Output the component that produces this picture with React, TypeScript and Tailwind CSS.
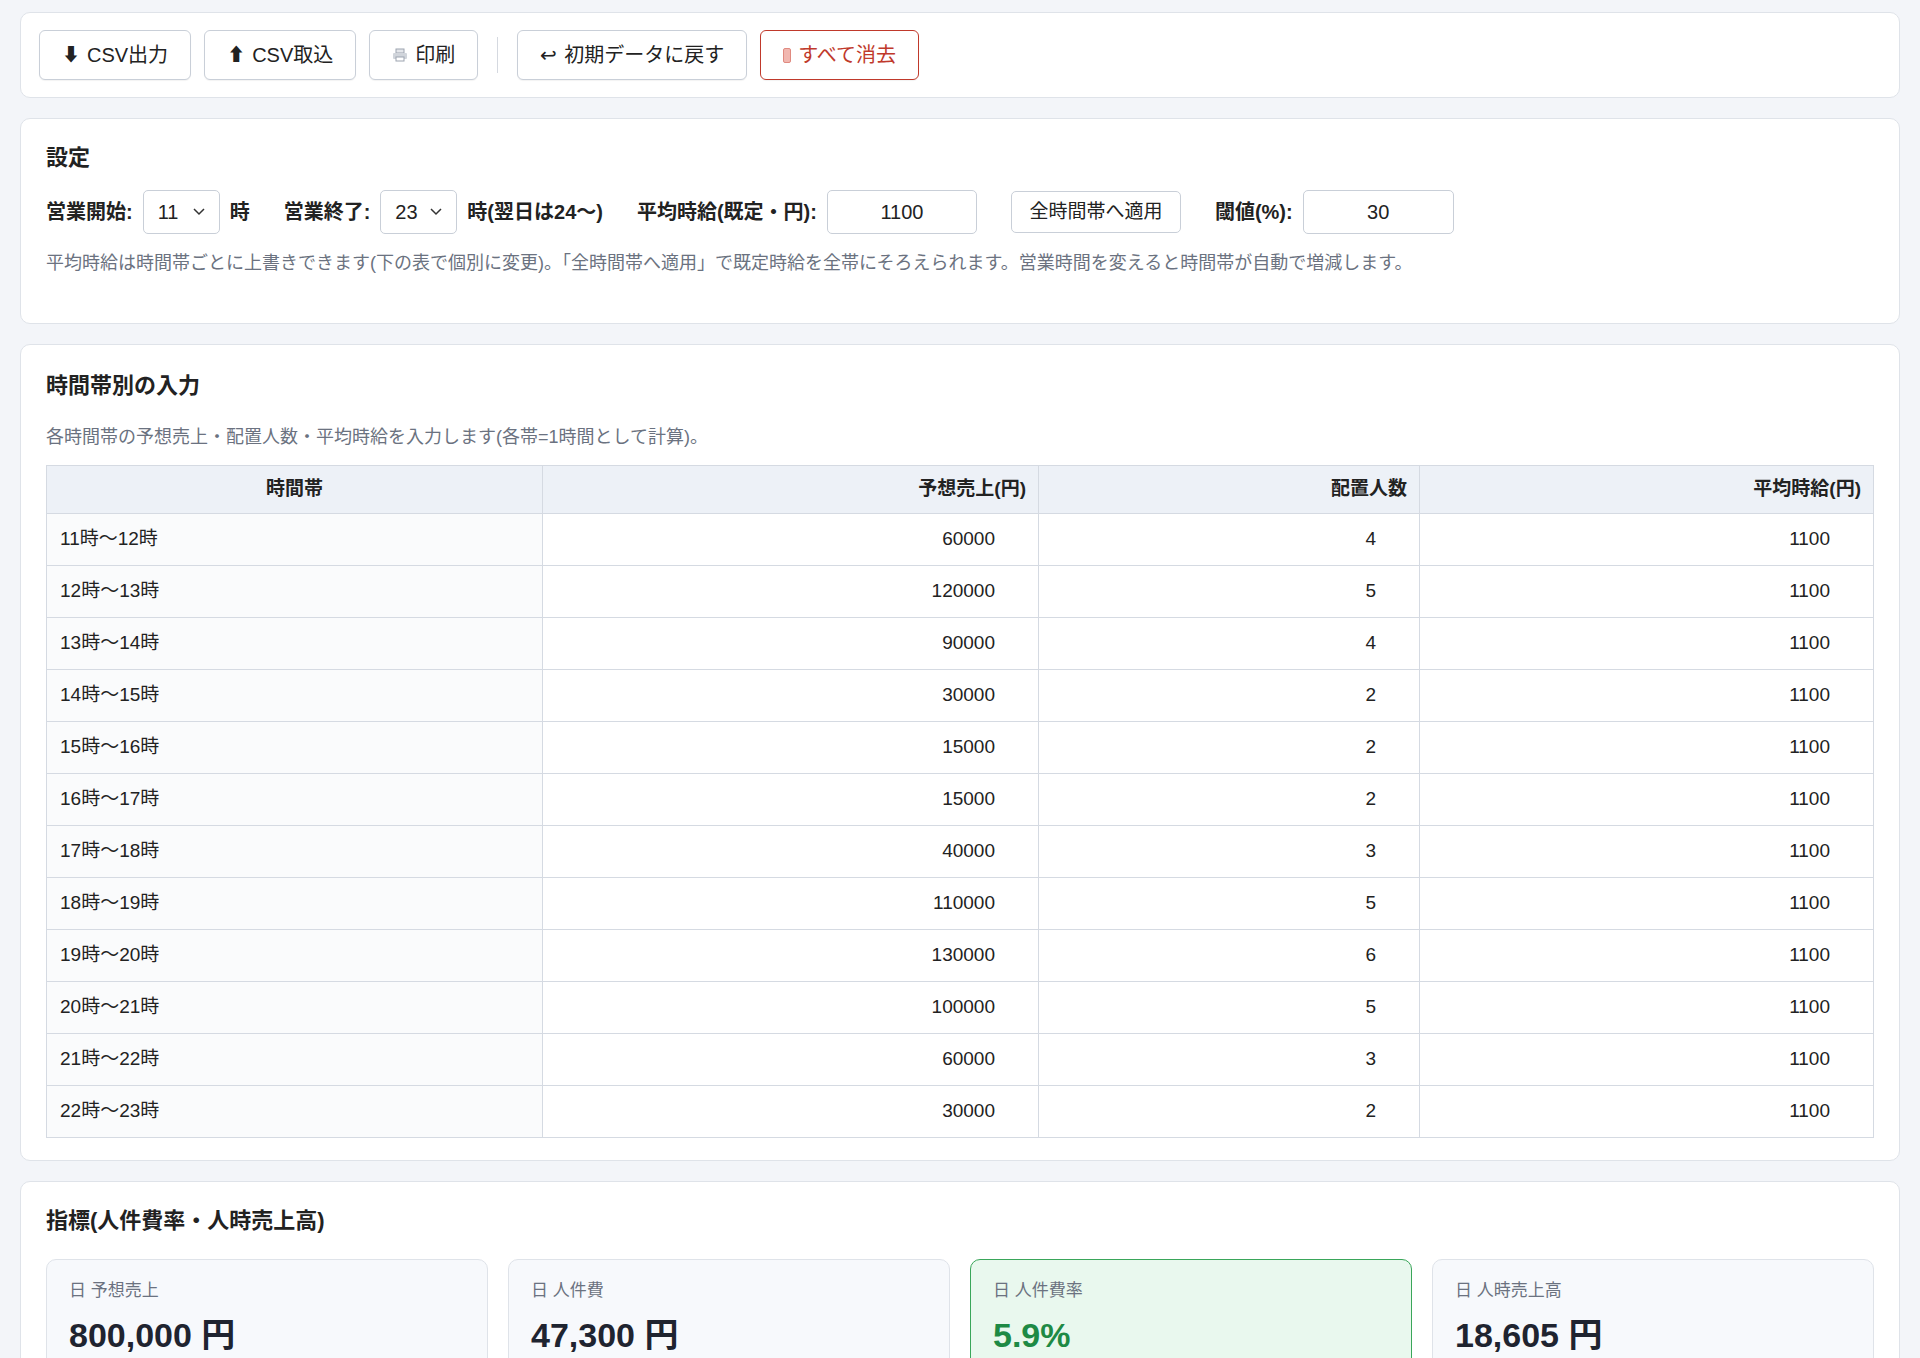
import React from 'react';

const rows: [string, number, number, number][] = [
  ['11時〜12時', 60000, 4, 1100],
  ['12時〜13時', 120000, 5, 1100],
  ['13時〜14時', 90000, 4, 1100],
  ['14時〜15時', 30000, 2, 1100],
  ['15時〜16時', 15000, 2, 1100],
  ['16時〜17時', 15000, 2, 1100],
  ['17時〜18時', 40000, 3, 1100],
  ['18時〜19時', 110000, 5, 1100],
  ['19時〜20時', 130000, 6, 1100],
  ['20時〜21時', 100000, 5, 1100],
  ['21時〜22時', 60000, 3, 1100],
  ['22時〜23時', 30000, 2, 1100],
];

const btn = 'h-[50px] px-[22px] rounded-[6px] border border-[#c9cfd8] bg-white text-[20px] text-[#222] flex items-center gap-[7px] shadow-[0_1px_1px_rgba(0,0,0,0.05)]';

const Select = ({ value }: { value: string }) => (
  <div className="w-[77px] h-[44px] border border-[#c9cfd8] rounded-[5px] bg-white flex items-center justify-between px-[14px] text-[20px] font-normal">
    <span>{value}</span>
    <svg width="12" height="8" viewBox="0 0 12 8"><path d="M1 1l5 5 5-5" stroke="#333" strokeWidth="1.5" fill="none" /></svg>
  </div>
);

const Input = ({ value, w }: { value: string; w: string }) => (
  <div className={`${w} h-[44px] border border-[#c9cfd8] rounded-[5px] bg-white flex items-center justify-center text-[20px] font-normal`}>{value}</div>
);

const Card = ({ children, className = '' }: { children: React.ReactNode; className?: string }) => (
  <div className={`bg-white border border-[#dfe3e9] rounded-[10px] ${className}`}>{children}</div>
);

const metrics = [
  { label: '日 予想売上', value: '800,000 円' },
  { label: '日 人件費', value: '47,300 円' },
  { label: '日 人件費率', value: '5.9%', ok: true },
  { label: '日 人時売上高', value: '18,605 円' },
];

export default function App() {
  return (
    <div className="h-[1358px] overflow-hidden bg-[#f3f5f9] px-[20px] pt-[12px] text-[#222]" style={{ fontFamily: '"Liberation Sans", "Noto Sans CJK JP", sans-serif' }}>
      <Card className="h-[86px] px-[18px] flex items-center gap-[13px]">
        <button className={btn}><span className="text-[18px]">⬇</span>CSV出力</button>
        <button className={btn}><span className="text-[18px]">⬆</span>CSV取込</button>
        <button className={btn}>
          <svg width="16" height="14" viewBox="0 0 16 14"><rect x="4" y="1" width="8" height="4" fill="#e5e7eb" stroke="#9ca3af" /><rect x="1" y="5" width="14" height="6" rx="1" fill="#d1d5db" /><rect x="4" y="9" width="8" height="4" fill="#fff" stroke="#9ca3af" /></svg>
          印刷
        </button>
        <div className="w-px h-[36px] bg-[#d5d9e0] mx-[6px]" />
        <button className={btn}><span>↩</span>初期データに戻す</button>
        <button className={`${btn} !border-[#c0392b] !text-[#c0392b]`}>
          <span className="w-[8px] h-[15px] rounded-[2px] bg-[#f1b7b0] border border-[#e08a80]" />すべて消去
        </button>
      </Card>

      <Card className="mt-[20px] h-[206px] px-[25px] pt-[22px]">
        <h2 className="text-[22px] font-bold">設定</h2>
        <div className="mt-[16px] flex items-center text-[20px] font-bold">
          <span>営業開始:</span>
          <span className="ml-[10px]"><Select value="11" /></span>
          <span className="ml-[10px]">時</span>
          <span className="ml-[34px]">営業終了:</span>
          <span className="ml-[10px]"><Select value="23" /></span>
          <span className="ml-[10px]">時(翌日は24〜)</span>
          <span className="ml-[34px]">平均時給(既定・円):</span>
          <span className="ml-[10px]"><Input value="1100" w="w-[150px]" /></span>
          <button className="ml-[34px] h-[42px] w-[170px] border border-[#c9cfd8] rounded-[5px] text-[19px] font-normal">全時間帯へ適用</button>
          <span className="ml-[34px]">閾値(%):</span>
          <span className="ml-[10px]"><Input value="30" w="w-[151px]" /></span>
        </div>
        <p className="mt-[16px] text-[18px] text-[#6b7280]">平均時給は時間帯ごとに上書きできます(下の表で個別に変更)。「全時間帯へ適用」で既定時給を全帯にそろえられます。営業時間を変えると時間帯が自動で増減します。</p>
      </Card>

      <Card className="mt-[20px] px-[25px] pt-[24px] pb-[22px]">
        <h2 className="text-[22px] font-bold">時間帯別の入力</h2>
        <p className="mt-[22px] text-[18px] text-[#6b7280]">各時間帯の予想売上・配置人数・平均時給を入力します(各帯=1時間として計算)。</p>
        <table className="mt-[14px] w-full border-collapse text-[19px]">
          <thead>
            <tr className="bg-[#edf1f7] h-[48px] font-bold">
              <th className="w-[496px] border border-[#d5dae2] text-center">時間帯</th>
              <th className="w-[496px] border border-[#d5dae2] text-right pr-[12px]">予想売上(円)</th>
              <th className="w-[381px] border border-[#d5dae2] text-right pr-[12px]">配置人数</th>
              <th className="border border-[#d5dae2] text-right pr-[12px]">平均時給(円)</th>
            </tr>
          </thead>
          <tbody>
            {rows.map(([t, s, n, w]) => (
              <tr key={t} className="h-[52px]">
                <td className="border border-[#d5dae2] bg-[#fafbfc] pl-[13px]">{t}</td>
                <td className="border border-[#d5dae2] text-right pr-[43px]">{s}</td>
                <td className="border border-[#d5dae2] text-right pr-[43px]">{n}</td>
                <td className="border border-[#d5dae2] text-right pr-[43px]">{w}</td>
              </tr>
            ))}
          </tbody>
        </table>
      </Card>

      <Card className="mt-[20px] px-[25px] pt-[22px] pb-[30px]">
        <h2 className="text-[22px] font-bold">指標(人件費率・人時売上高)</h2>
        <div className="mt-[22px] grid grid-cols-4 gap-[20px]">
          {metrics.map((m) => (
            <div key={m.label} className={`rounded-[10px] border px-[22px] pt-[18px] pb-[24px] ${m.ok ? 'bg-[#e9f8ee] border-[#3aa65a]' : 'bg-[#f7f9fc] border-[#dfe3e9]'}`}>
              <div className="text-[17px] text-[#6b7280]">{m.label}</div>
              <div className={`mt-[6px] text-[34px] font-bold ${m.ok ? 'text-[#1e8a45]' : 'text-[#1f2430]'}`}>{m.value}</div>
            </div>
          ))}
        </div>
      </Card>
    </div>
  );
}
